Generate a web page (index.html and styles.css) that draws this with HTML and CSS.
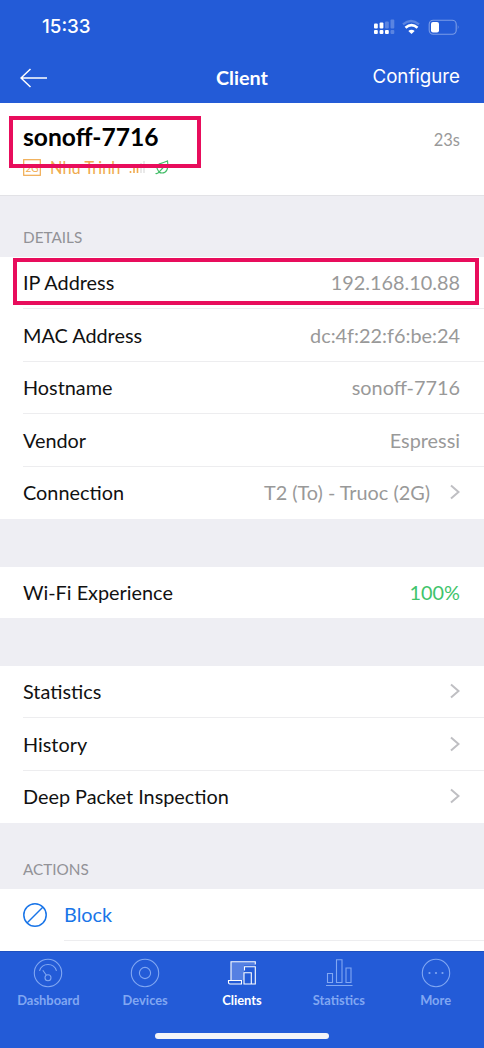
FILE: index.html
```html
<!DOCTYPE html>
<html lang="en">
<head>
<meta charset="utf-8">
<title>Client</title>
<link rel="stylesheet" href="styles.css">
</head>
<body>
<div class="app">
  <header class="top">
    <div class="status">
      <span class="clock">15:33</span>
      <svg class="status-icons" width="88" height="20" viewBox="0 0 88 20">
        <g fill="#fff"><rect x="1" y="6.5" width="3.8" height="5" rx="1"/><rect x="6.6" y="5.5" width="3.8" height="6" rx="1"/><rect x="1" y="13" width="3.8" height="4" rx="1"/><rect x="6.6" y="13" width="3.8" height="4" rx="1"/><rect x="12" y="13" width="3.8" height="4" rx="1"/></g>
        <g fill="#fff" opacity=".25"><rect x="12" y="4.5" width="3.8" height="7" rx="1"/><rect x="17.5" y="2.5" width="3.8" height="9" rx="1"/><rect x="17.5" y="13" width="3.8" height="4" rx="1"/></g>
        <path d="M30 7.3Q38 .5 46 7.3" fill="none" stroke="#fff" stroke-opacity=".25" stroke-width="2.4"/>
        <path d="M32.5 10.8Q38.500 5.600 44.500 10.800" fill="none" stroke="#fff" stroke-width="2.700"/>
        <path d="M35.300 14Q38.500 11.300 41.700 14L38.500 17Z" fill="#fff"/>
        <rect x="56.200" y="3.2" width="27" height="14" rx="4" fill="none" stroke="#fff" stroke-opacity=".4" stroke-width="1.1"/>
        <rect x="58" y="5" width="8" height="10.5" rx="2" fill="#fff"/>
        <path d="M84.800 8v4.5q1.7-2.2 0-4.5" fill="#fff" opacity=".4"/>
      </svg>
    </div>
    <div class="nav">
      <svg class="back" width="30" height="22" viewBox="0 0 30 22"><path d="M27 11H1M10.5 2L1 11l9.500 9" fill="none" stroke="#fff" stroke-width="1.5"/></svg>
      <span class="title">Client</span>
      <span class="configure">Configure</span>
    </div>
  </header>

  <section class="client">
    <div class="identity">
      <div class="name">sonoff-7716</div>
      <div class="network">
        <svg width="18" height="17" viewBox="0 0 18 17"><rect x=".7" y=".7" width="16.600" height="15.600" fill="none" stroke="#f0aa4e" stroke-width="1.2"/><text x="9" y="12.500" text-anchor="middle" class="band">2G</text></svg>
        <span class="ssid">Nhu Trinh</span>
        <svg class="signal" width="16" height="14" viewBox="0 0 16 14"><path d="M1.500 11v2M5 8v5M8.500 5v8" stroke="#f0aa4e" stroke-width="1.600"/><path d="M12 3v10M15 1v12" stroke="#ddd" stroke-width="1.300"/></svg>
        <svg class="leaf" width="14" height="15" viewBox="0 0 14 15"><path d="M.5 13.500Q3 14 4.500 11.500L9.500 6M4 12Q-.5 6 4.500 3.800Q8.500 2.800 12.500 1Q14 13 7 13Q5 13 4 12" fill="none" stroke="#43bd68" stroke-width="1.200"/></svg>
      </div>
    </div>
    <span class="age">23s</span>
    <div class="mark mark-name"></div>
  </section>

  <h2 class="section-title details">DETAILS</h2>
  <section class="list">
    <div class="row"><span>IP Address</span><span class="value">192.168.10.88</span><div class="mark mark-ip"></div></div>
    <div class="row"><span>MAC Address</span><span class="value">dc:4f:22:f6:be:24</span></div>
    <div class="row"><span>Hostname</span><span class="value">sonoff-7716</span></div>
    <div class="row"><span>Vendor</span><span class="value">Espressi</span></div>
    <div class="row"><span>Connection</span><span class="value">T2 (To) - Truoc (2G)</span><svg class="chevron" width="10" height="16" viewBox="0 0 10 16"><path d="M1 1.500L8.500 8L1 14.500"/></svg></div>
  </section>

  <section class="list gap">
    <div class="row single"><span>Wi-Fi Experience</span><span class="value good">100%</span></div>
  </section>

  <section class="list gap">
    <div class="row"><span>Statistics</span><svg class="chevron" width="10" height="16" viewBox="0 0 10 16"><path d="M1 1.500L8.500 8L1 14.500"/></svg></div>
    <div class="row"><span>History</span><svg class="chevron" width="10" height="16" viewBox="0 0 10 16"><path d="M1 1.500L8.500 8L1 14.500"/></svg></div>
    <div class="row"><span>Deep Packet Inspection</span><svg class="chevron" width="10" height="16" viewBox="0 0 10 16"><path d="M1 1.500L8.500 8L1 14.500"/></svg></div>
  </section>

  <h2 class="section-title actions">ACTIONS</h2>
  <section class="list action-list">
    <div class="action">
      <svg width="24" height="24" viewBox="0 0 24 24"><g fill="none" stroke="#1975e8" stroke-width="1.500"><circle cx="12" cy="12" r="11.200"/><path d="M4 20L20 4"/></g></svg>
      <span class="block">Block</span>
    </div>
  </section>

  <nav class="tabs">
    <div class="tab"><svg width="30" height="30" viewBox="0 0 30 30"><circle cx="15" cy="15" r="13.700"/><path d="M6.500 12.800Q8.500 6.500 15 6.500T23.500 12.800M9.800 12.300L13.400 17.300"/><circle cx="15" cy="19.700" r="3"/></svg><span>Dashboard</span></div>
    <div class="tab"><svg width="30" height="30" viewBox="0 0 30 30"><circle cx="15" cy="15" r="13.700"/><circle cx="15" cy="15" r="5.600"/></svg><span>Devices</span></div>
    <div class="tab active"><svg width="30" height="30" viewBox="0 0 30 30"><path class="screen" d="M4 22V4H28V7.500H17V22Z"/><path d="M4 22V3.700H28.300V6.500M1.500 22.500H14.500V26H3Q1.500 26 1.500 24.500ZM17.500 12.500V8.800H28.300V26H24.800M17 14.800H24.300V26H17Z"/></svg><span>Clients</span></div>
    <div class="tab"><svg width="30" height="30" viewBox="0 0 30 30"><path d="M3.500 15.500h5v9h-5zM12.500 1.800h5.500v22.700h-5.500zM22 10h5v14.500h-5zM2 27.500h26.500"/></svg><span>Statistics</span></div>
    <div class="tab"><svg width="30" height="30" viewBox="0 0 30 30"><circle cx="15" cy="15" r="13.700"/><g class="dots"><circle cx="8.500" cy="15" r="1.100"/><circle cx="15" cy="15" r="1.100"/><circle cx="21.500" cy="15" r="1.100"/></g></svg><span>More</span></div>
    <div class="home"></div>
  </nav>
</div>
</body>
</html>
```
FILE: styles.css
```css
* { box-sizing: border-box; }
body { margin: 0; background: #eeeef3; font-family: Lato, sans-serif; color: #111; }
.app { width: 484px; height: 1048px; display: flex; flex-direction: column; overflow: hidden; }
.top { height: 103px; flex: none; background: #235bd7; color: #fff; }
.status { height: 52px; display: flex; justify-content: space-between; align-items: center; padding: 2px 23px 0 42px; }
.clock { font: 500 18.800px/24px Inter, sans-serif; }
.nav { height: 51px; display: grid; grid-template-columns: 1fr 1fr 1fr; align-items: center; padding: 0 24px 1px; }
.back { margin: 1px 0 0 -4px; }
.title { font-size: 19.800px; font-weight: 700; text-align: center; }
.configure { font: 400 18.700px/24px Inter, sans-serif; text-align: right; }
.client { height: 93px; flex: none; position: relative; display: flex; justify-content: space-between; background: #fff; border-bottom: 1px solid #e2e2e6; padding: 17px 24px 0 23px; }
.name { color: #000; font-size: 24.600px; line-height: 33px; font-weight: 700; }
.network { height: 20px; display: flex; align-items: center; margin-top: 4px; color: #f0aa4e; }
.ssid { font-size: 16.400px; margin-left: 9px; }
.signal { margin-left: 9px; }
.leaf { margin-left: 10px; }
.band { font: 10px Lato, sans-serif; fill: #f0aa4e; }
.age { color: #999; font-size: 16.500px; line-height: 40px; }
.mark { position: absolute; border: 4px solid #e80d5c; }
.mark-name { left: 9px; top: 13px; width: 192px; height: 52px; }
.mark-ip { left: 13px; top: 1px; width: 466px; height: 47px; }
.section-title { margin: 0; flex: none; padding-left: 23px; color: #929297; font-size: 15.300px; font-weight: 400; }
.details { height: 61px; line-height: 83px; }
.actions { height: 65.500px; line-height: 92px; }
.list { flex: none; background: #fff; }
.gap { margin-top: 47.700px; }
.row { height: 52.400px; position: relative; display: flex; align-items: center; padding: 0 24px 1.500px 23px; font-size: 19.850px; line-height: 26px; }
.row.single { height: 51.600px; }
.row:not(:last-child)::after { content: ""; position: absolute; left: 23px; right: 0; bottom: 0; height: 1px; background: #ededef; }
.value { margin-left: auto; color: #999; }
.good { color: #3fc46b; }
.chevron { flex: none; margin-left: auto; }
.value + .chevron { margin-left: 20px; }
.chevron path { fill: none; stroke: #bfbfc3; stroke-width: 2; }
.action-list { flex: 1; }
.action { height: 52px; display: flex; align-items: center; gap: 17px; padding-left: 23px; position: relative; font-size: 19.850px; color: #1975e8; }
.block { margin-top: -1px; }
.action::after { content: ""; position: absolute; left: 64px; right: 0; bottom: 0; height: 1px; background: #ededef; }
.tabs { flex: none; height: 97px; position: relative; display: flex; background: #235bd7; border-top: 1px solid #1e50c0; }
.tab { flex: 1; display: flex; flex-direction: column; align-items: center; padding-top: 6px; color: #81a7f2; font-size: 12.900px; line-height: 18px; font-weight: 700; }
.tab svg { flex: none; margin-bottom: 3px; fill: none; stroke: #81a7f2; stroke-width: 1.100; }
.tab.active { color: #fff; }
.tab.active svg { stroke: #fff; }
.tab .screen { fill: #5580e2; stroke: none; }
.dots { fill: #81a7f2; stroke: none; }
.home { position: absolute; left: 155px; bottom: 9px; width: 174px; height: 6px; border-radius: 3px; background: #f3f4f8; }
```
